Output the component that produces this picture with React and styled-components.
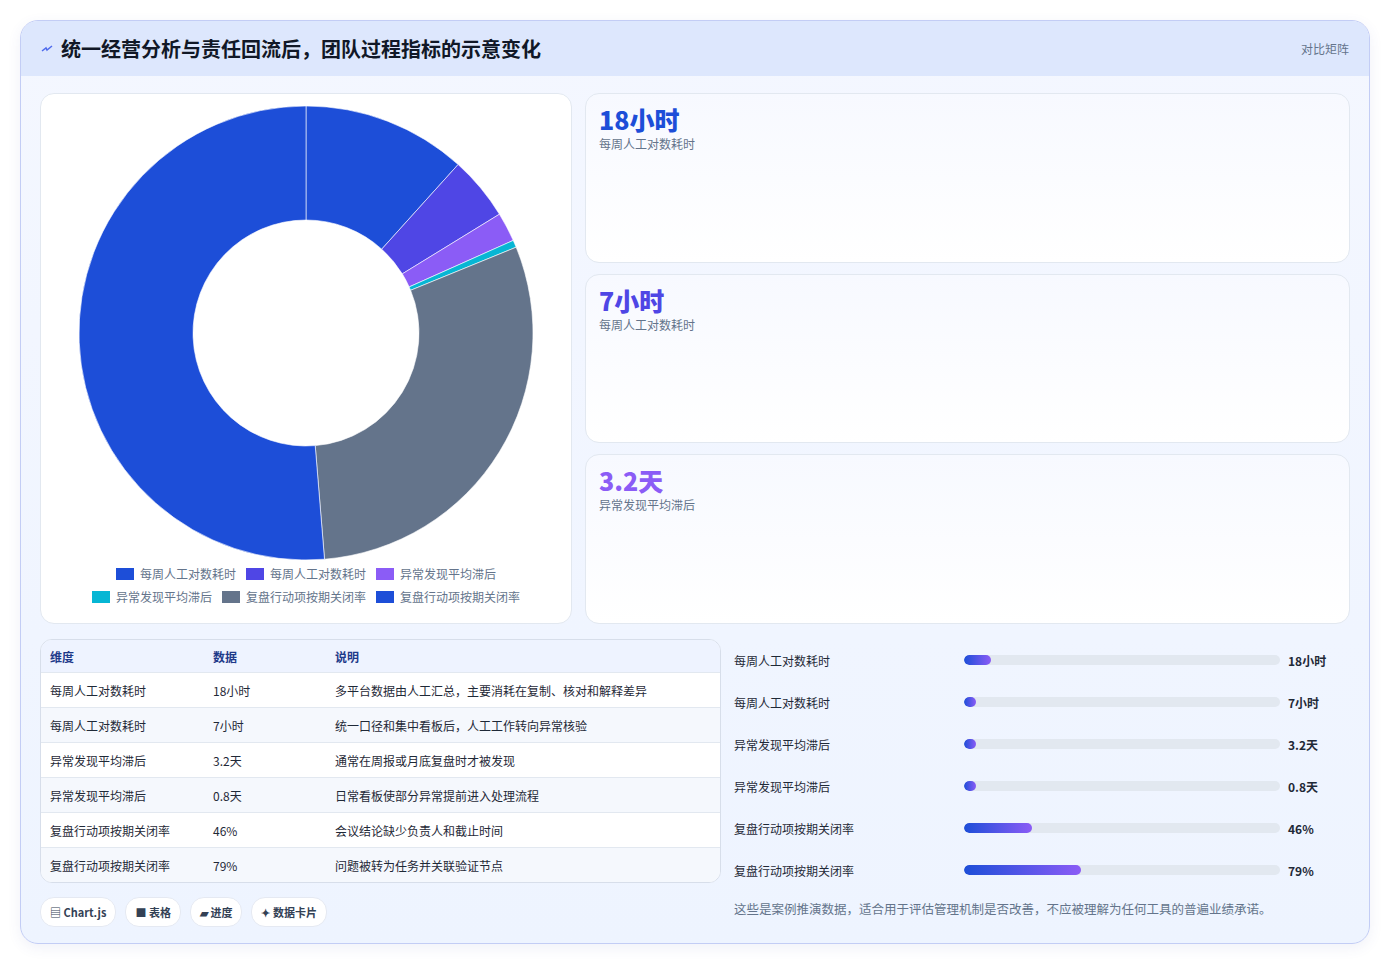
import React from "react";
import styled, { createGlobalStyle } from "styled-components";

const G = createGlobalStyle`
  body{margin:0;background:#fff;font-family:"Noto Sans CJK SC","Noto Sans",sans-serif;}
`;
const Page = styled.div`padding:20px;`;
const Card = styled.div`border:1px solid #c3cdf5;border-radius:18px;background:linear-gradient(180deg,#f4f7ff,#eef4ff);overflow:hidden;box-shadow:0 4px 14px rgba(60,80,160,.08);`;
const Header = styled.div`height:55px;background:#dde7fd;display:flex;align-items:center;justify-content:space-between;padding:0 20px;`;
const Title = styled.h1`margin:0;font-size:20px;font-weight:700;color:#111827;display:flex;align-items:center;gap:8px;`;
const Tag = styled.span`font-size:12px;color:#64748b;`;
const Body = styled.div`padding:17px 19px 16px;display:flex;flex-direction:column;gap:15px;`;
const Top = styled.div`display:grid;grid-template-columns:532px 1fr;gap:13px;`;
const Lower = styled.div`display:grid;grid-template-columns:681px 1fr;gap:13px;`;
const ChartCard = styled.div`background:#fff;border:1px solid #e2e8f0;border-radius:14px;height:531px;display:flex;flex-direction:column;align-items:center;padding-top:11px;box-sizing:border-box;`;
const Legend = styled.div`display:flex;flex-wrap:wrap;justify-content:center;gap:6px 10px;width:440px;margin-top:4px;font-size:12px;color:#64748b;`;
const LItem = styled.span`display:flex;align-items:center;gap:6px;&::before{content:"";width:18px;height:12px;background:${p=>p.c};}`;
const Stats = styled.div`display:grid;grid-template-rows:repeat(3,1fr);gap:11px;`;
const Stat = styled.div`background:linear-gradient(180deg,#f7f9ff,#fff);border:1px solid #e2e8f0;border-radius:14px;padding:9px 13px;`;
const Big = styled.div`font-size:25px;font-weight:800;color:${p=>p.c};line-height:32px;`;
const Small = styled.div`font-size:12px;color:#64748b;`;
const Table = styled.div`border:1px solid #d7deea;border-radius:12px;overflow:hidden;background:#fff;`;
const Row = styled.div`display:grid;grid-template-columns:163px 122px 1fr;align-items:center;padding-left:9px;font-size:12px;color:${p=>p.h?"#1e3a8a":"#1f2937"};font-weight:${p=>p.h?600:400};background:${p=>p.h?"#eef3ff":p.alt?"#f5f8fd":"#fff"};border-top:${p=>p.first?"none":"1px solid #e2e8f0"};height:${p=>p.h?32:34}px;`;
const Bars = styled.div`display:flex;flex-direction:column;`;
const BarRow = styled.div`display:grid;grid-template-columns:230px 316px 1fr;align-items:center;height:42px;font-size:12px;color:#1f2937;&>b{padding-left:8px;}`;
const Track = styled.div`height:10px;border-radius:5px;background:#e2e8f0;overflow:hidden;`;
const Fill = styled.div`height:100%;border-radius:5px;background:linear-gradient(90deg,#1d4ed8,#8b5cf6);`;
const Note = styled.div`font-size:12.5px;color:#64748b;margin-top:8px;`;
const Chips = styled.div`display:flex;gap:9px;`;
const Chip = styled.span`font-size:11px;font-weight:600;color:#334155;background:#fff;border:1px solid #e5e9f2;border-radius:14px;padding:6px 9px;`;
const Bottom = styled.div`display:flex;flex-direction:column;gap:14px;`;

const data=[["每周人工对数耗时",18,"#1d4ed8"],["每周人工对数耗时",7,"#4f46e5"],["异常发现平均滞后",3.2,"#8b5cf6"],["异常发现平均滞后",0.8,"#06b6d4"],["复盘行动项按期关闭率",46,"#64748b"],["复盘行动项按期关闭率",79,"#1d4ed8"]];
function Donut(){
  const tot=data.reduce((s,d)=>s+d[1],0);let a=0;const R=227,r=113,c=228;
  const pt=(ang,rad)=>[c+rad*Math.sin(ang),c-rad*Math.cos(ang)];
  return <svg width="456" height="456">{data.map((d,i)=>{const a0=a;a+=d[1]/tot*2*Math.PI;const a1=a;const l=a1-a0>Math.PI?1:0;
    const [x0,y0]=pt(a0,R),[x1,y1]=pt(a1,R),[x2,y2]=pt(a1,r),[x3,y3]=pt(a0,r);
    return <path key={i} d={`M${x0} ${y0}A${R} ${R} 0 ${l} 1 ${x1} ${y1}L${x2} ${y2}A${r} ${r} 0 ${l} 0 ${x3} ${y3}Z`} fill={d[2]} stroke="#fff" strokeWidth="0.6"/>})}</svg>;
}
const rows=[["每周人工对数耗时","18小时","多平台数据由人工汇总，主要消耗在复制、核对和解释差异"],["每周人工对数耗时","7小时","统一口径和集中看板后，人工工作转向异常核验"],["异常发现平均滞后","3.2天","通常在周报或月底复盘时才被发现"],["异常发现平均滞后","0.8天","日常看板使部分异常提前进入处理流程"],["复盘行动项按期关闭率","46%","会议结论缺少负责人和截止时间"],["复盘行动项按期关闭率","79%","问题被转为任务并关联验证节点"]];
const widths=[27,12,12,12,68,117];
export default function App(){return <Page><G/><Card>
  <Header><Title><svg width="12" height="10" viewBox="0 0 12 10"><path d="M1 7L5 4L6 6L11 2" stroke="#4f6bed" strokeWidth="1.5" fill="none"/></svg>统一经营分析与责任回流后，团队过程指标的示意变化</Title><Tag>对比矩阵</Tag></Header>
  <Body>
    <Top>
      <ChartCard><Donut/><Legend>{data.map((d,i)=><LItem key={i} c={d[2]}>{d[0]}</LItem>)}</Legend></ChartCard>
      <Stats>
        <Stat><Big c="#1d4ed8">18小时</Big><Small>每周人工对数耗时</Small></Stat>
        <Stat><Big c="#4f46e5">7小时</Big><Small>每周人工对数耗时</Small></Stat>
        <Stat><Big c="#8b5cf6">3.2天</Big><Small>异常发现平均滞后</Small></Stat>
      </Stats>
    </Top>
    <Lower>
      <Bottom>
        <Table><Row h first><span>维度</span><span>数据</span><span>说明</span></Row>
          {rows.map((r,i)=><Row key={i} alt={i%2==1}><span>{r[0]}</span><span>{r[1]}</span><span>{r[2]}</span></Row>)}</Table>
        <Chips><Chip>▤ Chart.js</Chip><Chip>■ 表格</Chip><Chip>▰ 进度</Chip><Chip>✦ 数据卡片</Chip></Chips>
      </Bottom>
      <Bars>{rows.map((r,i)=><BarRow key={i}><span>{r[0]}</span><Track><Fill style={{width:widths[i]}}/></Track><b>{r[1]}</b></BarRow>)}
        <Note>这些是案例推演数据，适合用于评估管理机制是否改善，不应被理解为任何工具的普遍业绩承诺。</Note></Bars>
    </Lower>
  </Body></Card></Page>;}
